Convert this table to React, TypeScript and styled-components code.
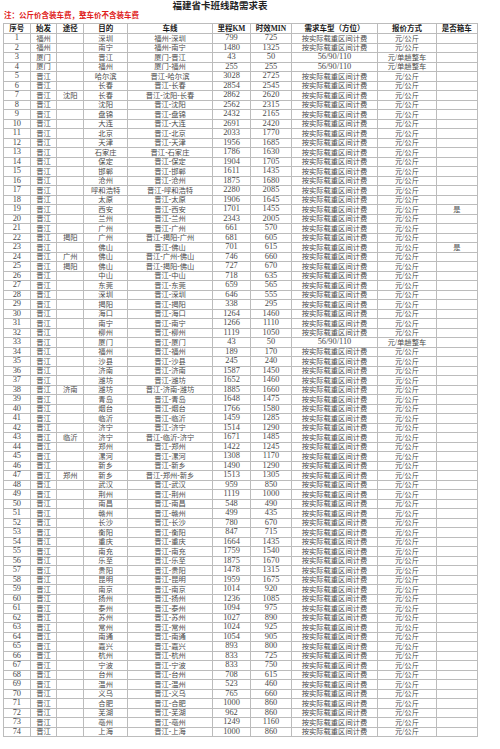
import styled, { createGlobalStyle } from "styled-components";

const GlobalStyle = createGlobalStyle`
  html, body {
    margin: 0;
    padding: 0;
    background: #fff;
  }
  body {
    font-family: "Liberation Serif", "Noto Sans CJK SC", serif;
    color: #333;
  }
`;

const Page = styled.div`
  width: 500px;
  height: 749px;
  overflow: hidden;
`;

const Title = styled.h1`
  margin: 0;
  width: 440px;
  height: 12px;
  line-height: 12px;
  text-align: center;
  font-size: 9.5px;
  font-weight: 700;
  color: #222;
`;

const Note = styled.p`
  margin: 0 0 3px 4px;
  height: 8px;
  line-height: 8px;
  font-size: 7.5px;
  font-weight: 700;
  color: #e01b1b;
`;

const Sheet = styled.div`
  margin-left: 3px;
  display: grid;
  grid-template-columns: 26.7px 26.7px 26.6px 44.4px 84.3px 38.7px 40.3px 86.7px 58.3px 41.3px;
  grid-template-rows: 10px;
  grid-auto-rows: 9.5px;
  width: max-content;
  border-top: 1px solid #bcbcbc;
  border-left: 1px solid #bcbcbc;
`;

const Cell = styled.div<{ $head?: boolean; $num?: boolean }>`
  box-sizing: border-box;
  display: flex;
  align-items: center;
  justify-content: center;
  overflow: hidden;
  white-space: nowrap;
  line-height: 1;
  border-right: 1px solid #bcbcbc;
  border-bottom: 1px solid #bcbcbc;
  font-size: ${({ $head, $num }) => ($head ? "7.5px" : $num ? "8.4px" : "7.3px")};
  font-weight: ${({ $head }) => ($head ? 700 : 400)};
  color: ${({ $head }) => ($head ? "#1a1a1a" : "#4a4a4a")};
`;

const headers = [
  "序号",
  "始发",
  "途径",
  "目的",
  "车线",
  "里程KM",
  "时效MIN",
  "需求车型（方位）",
  "报价方式",
  "是否箱车",
];

// 始发|途径|目的|里程|时效|整车?|箱车
const raw = `福州||深圳|799|725||
福州||南宁|1480|1325||
厦门||晋江|43|50|T|
厦门||福州|255|255|T|
晋江||哈尔滨|3028|2725||
晋江||长春|2854|2545||
晋江|沈阳|长春|2862|2620||
晋江||沈阳|2562|2315||
晋江||盘锦|2432|2165||
晋江||大连|2691|2420||
晋江||北京|2033|1770||
晋江||天津|1956|1685||
晋江||石家庄|1786|1630||
晋江||保定|1904|1705||
晋江||邯郸|1611|1435||
晋江||沧州|1875|1680||
晋江||呼和浩特|2280|2085||
晋江||太原|1906|1645||
晋江||西安|1701|1455||是
晋江||兰州|2343|2005||
晋江||广州|661|570||
晋江|揭阳|广州|681|605||
晋江||佛山|701|615||是
晋江|广州|佛山|746|660||
晋江|揭阳|佛山|727|670||
晋江||中山|718|635||
晋江||东莞|659|565||
晋江||深圳|646|555||
晋江||揭阳|338|295||
晋江||海口|1264|1460||
晋江||南宁|1266|1110||
晋江||柳州|1119|1050||
晋江||厦门|43|50|T|
晋江||福州|189|170||
晋江||沙县|245|240||
晋江||济南|1587|1450||
晋江||潍坊|1652|1460||
晋江|济南|潍坊|1885|1660||
晋江||青岛|1648|1475||
晋江||烟台|1766|1580||
晋江||临沂|1459|1285||
晋江||济宁|1514|1290||
晋江|临沂|济宁|1671|1485||
晋江||郑州|1422|1245||
晋江||漯河|1308|1170||
晋江||新乡|1490|1290||
晋江|郑州|新乡|1513|1305||
晋江||武汉|959|850||
晋江||荆州|1119|1000||
晋江||南昌|548|490||
晋江||赣州|499|435||
晋江||长沙|780|670||
晋江||衡阳|847|715||
晋江||重庆|1664|1435||
晋江||南充|1759|1540||
晋江||乐至|1875|1670||
晋江||贵阳|1478|1315||
晋江||昆明|1959|1675||
晋江||南京|1014|920||
晋江||扬州|1236|1085||
晋江||泰州|1094|975||
晋江||苏州|1027|890||
晋江||常州|1024|925||
晋江||南通|1054|905||
晋江||嘉兴|893|800||
晋江||杭州|833|725||
晋江||宁波|833|750||
晋江||台州|708|615||
晋江||温州|523|460||
晋江||义乌|765|660||
晋江||合肥|1000|860||
晋江||芜湖|962|860||
晋江||亳州|1249|1160||
晋江||上海|1000|860||`;

const routes = raw.split("\n").map((line, i) => {
  const [from, via, to, km, min, whole, box] = line.split("|");
  return {
    no: i + 1,
    from,
    via,
    to,
    line: [from, via, to].filter(Boolean).join("-"),
    km,
    min,
    type: whole ? "56/90/110" : "按实际载重区间计费",
    price: whole ? "元/单趟整车" : "元/公斤",
    box,
  };
});

export default function App() {
  return (
    <Page>
      <GlobalStyle />
      <Title>福建省卡班线路需求表</Title>
      <Note>注：公斤价含装车费，整车价不含装车费</Note>
      <Sheet>
        {headers.map((h) => (
          <Cell key={h} $head>
            {h}
          </Cell>
        ))}
        {routes.map((r) => [
          <Cell key={`${r.no}-no`} $num>{r.no}</Cell>,
          <Cell key={`${r.no}-from`}>{r.from}</Cell>,
          <Cell key={`${r.no}-via`}>{r.via}</Cell>,
          <Cell key={`${r.no}-to`}>{r.to}</Cell>,
          <Cell key={`${r.no}-line`}>{r.line}</Cell>,
          <Cell key={`${r.no}-km`} $num>{r.km}</Cell>,
          <Cell key={`${r.no}-min`} $num>{r.min}</Cell>,
          <Cell key={`${r.no}-type`} $num={r.type.startsWith("56")}>{r.type}</Cell>,
          <Cell key={`${r.no}-price`}>{r.price}</Cell>,
          <Cell key={`${r.no}-box`}>{r.box}</Cell>,
        ])}
      </Sheet>
    </Page>
  );
}
